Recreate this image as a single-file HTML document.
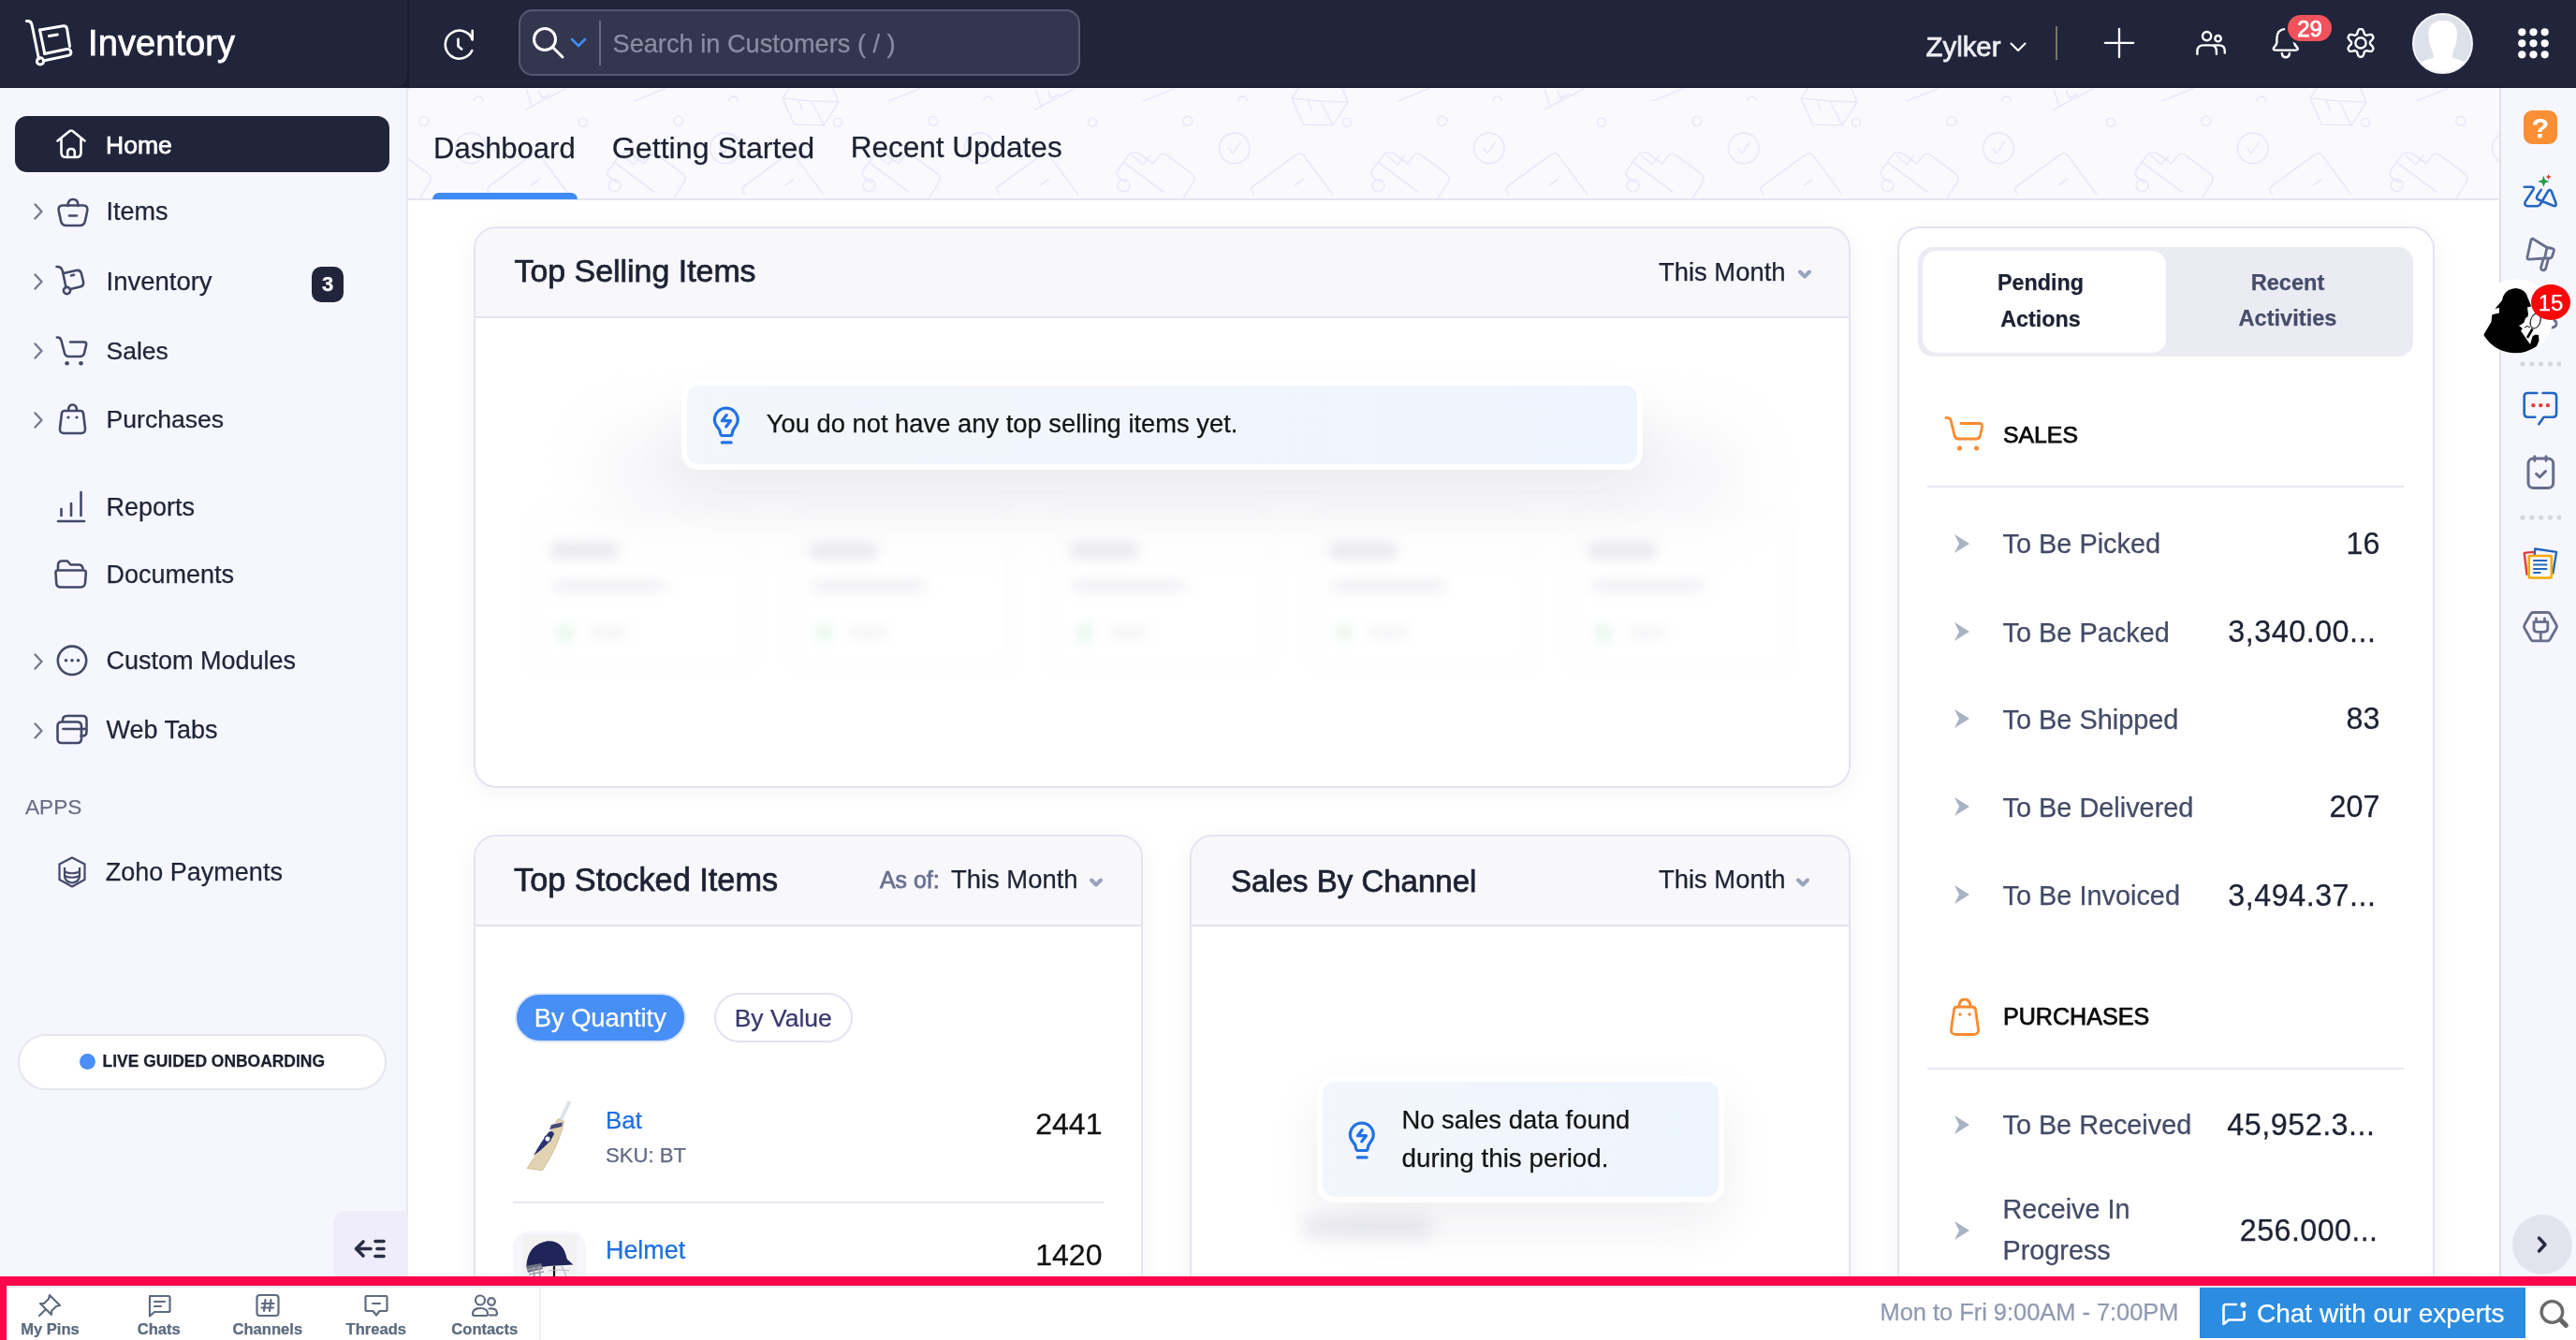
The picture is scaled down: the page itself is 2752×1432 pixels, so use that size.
<!DOCTYPE html><html><head><meta charset="utf-8"><style>
html,body{margin:0;padding:0;width:2752px;height:1432px;overflow:hidden;background:#fff;}
body{position:relative;font-family:"Liberation Sans",sans-serif;}
.t{position:absolute;line-height:1;white-space:nowrap;-webkit-text-stroke:0.25px currentColor;}
.b{position:absolute;box-sizing:border-box;}
.t.med{-webkit-text-stroke:0.75px currentColor;}
</style></head><body><div style="position:absolute;left:0;top:0;width:2752px;height:1432px;overflow:hidden;will-change:transform;">
<div class="b" style="left:0.00px;top:0.00px;width:2752.00px;height:94.00px;background:#21253b;"></div>
<div class="b" style="left:420.00px;top:76.00px;width:17.00px;height:18.00px;background:#191b2d;"></div>
<div class="b" style="left:0.00px;top:0.00px;width:435.00px;height:94.00px;background:#21253b;border-radius:0 0 14px 0;"></div>
<div class="b" style="left:435.00px;top:0.00px;width:1.50px;height:94.00px;background:#1b1d30;"></div>
<div class="b" style="left:0.00px;top:92.80px;width:2752.00px;height:1.20px;background:#181a2c;"></div>
<svg class="b" style="left:20.00px;top:10.00px;" width="60" height="64" viewBox="0 0 60 64" fill="none"><g stroke="#fff" stroke-width="3" stroke-linecap="round" stroke-linejoin="round">
<path d="M8.4 12.5 C11 12.2 13.5 13.5 14.1 16.7 L21.5 53"/>
<path d="M22.5 22 L47.5 17.8 Q51 17.4 51.6 20.8 L54.5 39.5"/>
<path d="M22.5 22 L27.7 47"/>
<path d="M27.5 47.5 L51 42.5 Q55.5 41.8 55.8 45.5 Q56.3 48.6 52.8 49.4 L28.5 54.5"/>
<path d="M32.4 28.5 L41.3 26.9"/>
<circle cx="23" cy="55.4" r="3.6"/></g></svg>
<div class="t med" style="top:26.83px;font-size:38px;color:#ffffff;left:94.00px;letter-spacing:0.1px;">Inventory</div>
<svg class="b" style="left:470.00px;top:26.00px;" width="42" height="42" viewBox="0 0 42 42" fill="none"><g stroke="#fff" stroke-width="2.6" stroke-linecap="round" stroke-linejoin="round" fill="none">
<path d="M34.7 16.2 A15 15 0 1 0 34.3 28"/>
<path d="M34.7 6.7 L34.7 16.2"/>
<path d="M19.5 15.7 L19.5 23.5 L23.2 26.4"/></g></svg>
<div class="b" style="left:554.00px;top:10.00px;width:600.00px;height:71.00px;background:#33364f;border:2px solid #55586f;border-radius:15px;"></div>
<svg class="b" style="left:566.00px;top:27.00px;" width="40" height="38" viewBox="0 0 40 38" fill="none"><g stroke="#fff" stroke-width="3" stroke-linecap="round" fill="none"><circle cx="16" cy="15" r="11.5"/><path d="M24.5 23.5 L35 34"/></g></svg>
<svg class="b" style="left:608.00px;top:38.00px;" width="20" height="16" viewBox="0 0 20 16" fill="none"><path d="M3 4 L10 11 L17 4" stroke="#3b8ff6" stroke-width="2.6" stroke-linecap="round" stroke-linejoin="round" fill="none"/></svg>
<div class="b" style="left:640.00px;top:22.00px;width:2.00px;height:48.00px;background:#686b80;"></div>
<div class="t " style="top:32.98px;font-size:27.2px;color:#8c8da2;left:654.50px;">Search in Customers ( / )</div>
<div class="t med" style="top:35.11px;font-size:29.4px;color:#ececf2;left:2057.50px;">Zylker</div>
<svg class="b" style="left:2144.00px;top:40.00px;" width="24" height="20" viewBox="0 0 24 20" fill="none"><path d="M4.5 6.5 L12 14 L19.5 6.5" stroke="#fff" stroke-width="2.1" stroke-linecap="round" stroke-linejoin="round" fill="none"/></svg>
<div class="b" style="left:2196.00px;top:28.00px;width:2.00px;height:36.00px;background:#77766f;"></div>
<svg class="b" style="left:2244.00px;top:26.00px;" width="40" height="40" viewBox="0 0 40 40" fill="none"><g stroke="#fff" stroke-width="2.3" stroke-linecap="round"><path d="M20 4.8 L20 35"/><path d="M4.8 19.8 L35.2 19.8"/></g></svg>
<svg class="b" style="left:2342.00px;top:30.00px;" width="40" height="32" viewBox="0 0 40 32" fill="none"><g stroke="#fff" stroke-width="2.4" stroke-linecap="round" fill="none">
<circle cx="15.6" cy="8.6" r="4.6"/><circle cx="27.6" cy="11.2" r="3.2"/>
<path d="M5.4 27.8 L5.4 25 Q5.4 18.4 12 18.4 L19.5 18.4 Q25.9 18.4 25.9 25 L25.9 27.8"/><path d="M22.5 18.4 L28.5 18.4 Q34.8 18.4 34.8 24.5 L34.8 26.5"/></g></svg>
<svg class="b" style="left:2422.00px;top:26.00px;" width="40" height="40" viewBox="0 0 40 40" fill="none"><g stroke="#fff" stroke-width="2.4" stroke-linecap="round" stroke-linejoin="round" fill="none">
<path d="M19.7 4.9 Q10.4 5.5 10.4 15 L10.4 19.5 Q10 22 7.5 24.5 Q5.3 27.6 9 27.6 L30.5 27.6 Q34.2 27.6 32 24.5 Q29.3 22 29 19.5 L29 15 Q29 5.5 19.7 4.9 Z"/>
<path d="M15.8 31 Q16.3 35.2 19.9 35.2 Q23.5 35.2 24 31"/></g></svg>
<div class="b" style="left:2444.00px;top:15.50px;width:47.00px;height:28.50px;background:#f1525b;border-radius:15px;box-shadow:0 0 0 3px #21253b;"></div>
<div class="t med" style="top:18.68px;font-size:24px;color:#ffffff;left:2444.00px;width:47px;text-align:center;">29</div>
<svg class="b" style="left:2501.00px;top:25.00px;" width="42" height="42" viewBox="0 0 42 42" fill="none"><g stroke="#fff" stroke-width="2.4" stroke-linejoin="round" fill="none"><path d="M31.00 20.90 L30.99 21.34 L30.96 21.77 L31.19 22.24 L31.73 22.79 L32.35 23.42 L32.98 24.11 L33.57 24.86 L34.06 25.65 L34.42 26.46 L34.41 27.15 L34.13 27.73 L33.82 28.30 L33.48 28.85 L33.12 29.39 L32.52 29.74 L31.65 29.83 L30.71 29.80 L29.77 29.67 L28.85 29.47 L28.01 29.25 L27.26 29.05 L26.74 29.09 L26.37 29.33 L26.00 29.56 L25.62 29.77 L25.23 29.96 L24.93 30.40 L24.73 31.14 L24.50 31.99 L24.21 32.88 L23.85 33.76 L23.41 34.59 L22.90 35.30 L22.29 35.64 L21.65 35.69 L21.00 35.70 L20.35 35.69 L19.71 35.64 L19.10 35.30 L18.59 34.59 L18.15 33.76 L17.79 32.88 L17.50 31.99 L17.27 31.14 L17.07 30.40 L16.77 29.96 L16.38 29.77 L16.00 29.56 L15.63 29.33 L15.26 29.09 L14.74 29.05 L13.99 29.25 L13.15 29.47 L12.23 29.67 L11.29 29.80 L10.35 29.83 L9.48 29.74 L8.88 29.39 L8.52 28.85 L8.18 28.30 L7.87 27.73 L7.59 27.15 L7.58 26.46 L7.94 25.65 L8.43 24.86 L9.02 24.11 L9.65 23.42 L10.27 22.79 L10.81 22.24 L11.04 21.77 L11.01 21.34 L11.00 20.90 L11.01 20.46 L11.04 20.03 L10.81 19.56 L10.27 19.01 L9.65 18.38 L9.02 17.69 L8.43 16.94 L7.94 16.15 L7.58 15.34 L7.59 14.65 L7.87 14.07 L8.18 13.50 L8.52 12.95 L8.88 12.41 L9.48 12.06 L10.35 11.97 L11.29 12.00 L12.23 12.13 L13.15 12.33 L13.99 12.55 L14.74 12.75 L15.26 12.71 L15.63 12.47 L16.00 12.24 L16.38 12.03 L16.77 11.84 L17.07 11.40 L17.27 10.66 L17.50 9.81 L17.79 8.92 L18.15 8.04 L18.59 7.21 L19.10 6.50 L19.71 6.16 L20.35 6.11 L21.00 6.10 L21.65 6.11 L22.29 6.16 L22.90 6.50 L23.41 7.21 L23.85 8.04 L24.21 8.92 L24.50 9.81 L24.73 10.66 L24.93 11.40 L25.23 11.84 L25.62 12.03 L26.00 12.24 L26.37 12.47 L26.74 12.71 L27.26 12.75 L28.01 12.55 L28.85 12.33 L29.77 12.13 L30.71 12.00 L31.65 11.97 L32.52 12.06 L33.12 12.41 L33.48 12.95 L33.82 13.50 L34.13 14.07 L34.41 14.65 L34.42 15.34 L34.06 16.15 L33.57 16.94 L32.98 17.69 L32.35 18.38 L31.73 19.01 L31.19 19.56 L30.96 20.03 L30.99 20.46 L31.00 20.90 Z"/><circle cx="21" cy="20.9" r="5.6"/></g></svg>
<div class="b" style="left:2577px;top:14px;width:65px;height:65px;border-radius:50%;background:#dde1ea;border:2px solid #f4f4f6;overflow:hidden;">
<svg width="65" height="65" viewBox="0 0 65 65" style="position:absolute;left:-2px;top:-2px"><g fill="#ffffff">
<path d="M17.5 23 Q17 8 32.8 8 Q48.5 8 48 24 Q47.5 34 44 40 L42.5 47.5 Q51 50 59 53.5 L66 66 L-1 66 L6 53.5 Q14 50 23 47.5 L21.5 40 Q18 34 17.5 23 Z"/></g></svg></div>
<svg class="b" style="left:2690.00px;top:30.00px;" width="34" height="34" viewBox="0 0 34 34" fill="none"><circle cx="4.3" cy="4.3" r="4.1" fill="#fff"/><circle cx="4.3" cy="16.3" r="4.1" fill="#fff"/><circle cx="4.3" cy="28.3" r="4.1" fill="#fff"/><circle cx="16.5" cy="4.3" r="4.1" fill="#fff"/><circle cx="16.5" cy="16.3" r="4.1" fill="#fff"/><circle cx="16.5" cy="28.3" r="4.1" fill="#fff"/><circle cx="28.7" cy="4.3" r="4.1" fill="#fff"/><circle cx="28.7" cy="16.3" r="4.1" fill="#fff"/><circle cx="28.7" cy="28.3" r="4.1" fill="#fff"/></svg>
<div class="b" style="left:0.00px;top:94.00px;width:435.00px;height:1270.00px;background:#f6f6fe;"></div>
<div class="b" style="left:434.00px;top:94.00px;width:2.00px;height:1270.00px;background:#e8e8f4;"></div>
<div class="b" style="left:16.00px;top:124.00px;width:400.00px;height:60.00px;background:#21253b;border-radius:13px;"></div>
<svg class="b" style="left:56.00px;top:136.00px;" width="40" height="36" viewBox="0 0 40 36" fill="none"><g stroke="#fff" stroke-width="2.6" stroke-linecap="round" stroke-linejoin="round" fill="none">
<path d="M5.5 14.5 L18.5 4 Q20 3 21.5 4 L34.5 14.5"/>
<path d="M9.5 12 L9.5 27 Q9.5 32 14.5 32 L25.5 32 Q30.5 32 30.5 27 L30.5 12"/>
<path d="M16.2 31.5 L16.2 26.5 Q16.2 23 20 23 Q23.8 23 23.8 26.5 L23.8 31.5"/></g></svg>
<div class="t med" style="top:142.07px;font-size:26.5px;color:#ffffff;left:113.00px;">Home</div>
<svg class="b" style="left:33.00px;top:216.00px;" width="16" height="20" viewBox="0 0 16 20" fill="none"><path d="M4.5 2.5 L11.5 10 L4.5 17.5" stroke="#777a8f" stroke-width="2.4" stroke-linecap="round" stroke-linejoin="round" fill="none"/></svg>
<div class="t " style="top:212.64px;font-size:27.0px;color:#1f2438;left:113.50px;">Items</div>
<svg class="b" style="left:33.00px;top:290.50px;" width="16" height="20" viewBox="0 0 16 20" fill="none"><path d="M4.5 2.5 L11.5 10 L4.5 17.5" stroke="#777a8f" stroke-width="2.4" stroke-linecap="round" stroke-linejoin="round" fill="none"/></svg>
<div class="t " style="top:286.72px;font-size:27.5px;color:#1f2438;left:113.50px;">Inventory</div>
<svg class="b" style="left:33.00px;top:364.50px;" width="16" height="20" viewBox="0 0 16 20" fill="none"><path d="M4.5 2.5 L11.5 10 L4.5 17.5" stroke="#777a8f" stroke-width="2.4" stroke-linecap="round" stroke-linejoin="round" fill="none"/></svg>
<div class="t " style="top:361.57px;font-size:26.5px;color:#1f2438;left:113.50px;">Sales</div>
<svg class="b" style="left:33.00px;top:438.50px;" width="16" height="20" viewBox="0 0 16 20" fill="none"><path d="M4.5 2.5 L11.5 10 L4.5 17.5" stroke="#777a8f" stroke-width="2.4" stroke-linecap="round" stroke-linejoin="round" fill="none"/></svg>
<div class="t " style="top:435.48px;font-size:26.6px;color:#1f2438;left:113.50px;">Purchases</div>
<div class="t " style="top:528.64px;font-size:27.0px;color:#1f2438;left:113.50px;">Reports</div>
<div class="t " style="top:601.14px;font-size:27.0px;color:#1f2438;left:113.50px;">Documents</div>
<svg class="b" style="left:33.00px;top:696.50px;" width="16" height="20" viewBox="0 0 16 20" fill="none"><path d="M4.5 2.5 L11.5 10 L4.5 17.5" stroke="#777a8f" stroke-width="2.4" stroke-linecap="round" stroke-linejoin="round" fill="none"/></svg>
<div class="t " style="top:693.14px;font-size:27.0px;color:#1f2438;left:113.50px;">Custom Modules</div>
<svg class="b" style="left:33.00px;top:770.50px;" width="16" height="20" viewBox="0 0 16 20" fill="none"><path d="M4.5 2.5 L11.5 10 L4.5 17.5" stroke="#777a8f" stroke-width="2.4" stroke-linecap="round" stroke-linejoin="round" fill="none"/></svg>
<div class="t " style="top:767.14px;font-size:27.0px;color:#1f2438;left:113.50px;">Web Tabs</div>
<div class="b" style="left:333.00px;top:285.00px;width:34.00px;height:37.50px;background:#21253b;border-radius:10px;"></div>
<div class="t " style="top:293.38px;font-size:22px;color:#ffffff;font-weight:700;left:333.00px;width:34px;text-align:center;">3</div>
<svg class="b" style="left:58.00px;top:208.00px;" width="38" height="36" viewBox="0 0 38 36" fill="none"><g stroke="#434a69" stroke-width="2.6" stroke-linecap="round" stroke-linejoin="round" fill="none"><path d="M14.5 12 Q14.5 5 20 5 Q25.5 5 25.5 12"/><path d="M9 11.5 L31 11.5 Q36 11.5 35.3 17 L33 28 Q32 33 27 33 L13 33 Q8 33 7 28 L4.7 17 Q4 11.5 9 11.5 Z"/><path d="M16 22.5 L24 22.5"/></g></svg>
<svg class="b" style="left:58.00px;top:280.00px;" width="38" height="38" viewBox="0 0 38 38" fill="none"><g stroke="#434a69" stroke-width="2.6" stroke-linecap="round" stroke-linejoin="round" fill="none"><path d="M2.5 5 Q7.5 4.8 8.8 9.5 L12.5 27"/><path d="M10 12 L23.5 9 Q28 8 29 12.5 L31 21 Q32 25.5 27.5 26.5 L17 29"/><path d="M18 14.5 L21 13.8"/><circle cx="13.5" cy="30.5" r="3.6"/></g></svg>
<svg class="b" style="left:58.00px;top:356.00px;" width="38" height="36" viewBox="0 0 38 36" fill="none"><g stroke="#434a69" stroke-width="2.6" stroke-linecap="round" stroke-linejoin="round" fill="none"><path d="M2.8 4.5 Q6.5 4.2 7.5 8 L11 21.5 Q12 25 15.5 25 L27.5 25 Q31 25 32 21.5 L34 13 Q35 9.5 31.5 9.5 L17 9.5"/></g><circle cx="13.6" cy="32.2" r="2.3" fill="#434a69"/><circle cx="28.5" cy="32.2" r="2.3" fill="#434a69"/></svg>
<svg class="b" style="left:58.00px;top:428.00px;" width="38" height="38" viewBox="0 0 38 38" fill="none"><g stroke="#434a69" stroke-width="2.6" stroke-linecap="round" stroke-linejoin="round" fill="none"><path d="M15 11 Q15 4.5 19.5 4.5 Q24 4.5 24 11"/><path d="M11 11 L28 11 Q30.5 11 31 13.5 L33 30 Q33.5 35 28.5 35 L10.5 35 Q5.5 35 6 30 L8 13.5 Q8.5 11 11 11 Z"/></g><circle cx="15" cy="18" r="1.6" fill="#434a69"/><circle cx="24" cy="18" r="1.6" fill="#434a69"/></svg>
<svg class="b" style="left:58.00px;top:522.00px;" width="38" height="38" viewBox="0 0 38 38" fill="none"><g stroke="#434a69" stroke-width="2.6" stroke-linecap="round" stroke-linejoin="round" fill="none"><path d="M4 35 L32 35"/><path d="M7.5 29 L7.5 22"/><path d="M18 29 L18 16"/><path d="M28.5 29 L28.5 4"/></g></svg>
<svg class="b" style="left:56.00px;top:594.00px;" width="40" height="38" viewBox="0 0 40 38" fill="none"><g stroke="#434a69" stroke-width="2.6" stroke-linecap="round" stroke-linejoin="round" fill="none"><path d="M6 14.5 L6 10 Q6 5.5 10.5 5.5 L16 5.5 L19.5 9.5 L28 9.5 Q32 9.5 32.5 13.5"/><path d="M5.5 15.5 L33.5 15.5 Q36 15.5 35.8 18 L35 29 Q34.6 33.5 30 33.5 L9 33.5 Q4.4 33.5 4.2 29 L3.5 18 Q3.3 15.5 5.5 15.5 Z"/></g></svg>
<svg class="b" style="left:57.00px;top:686.00px;" width="40" height="40" viewBox="0 0 40 40" fill="none"><g stroke="#434a69" stroke-width="2.6" stroke-linecap="round" stroke-linejoin="round" fill="none"><circle cx="20" cy="19.8" r="15.2"/></g><circle cx="13.5" cy="19.8" r="1.8" fill="#434a69"/><circle cx="20" cy="19.8" r="1.8" fill="#434a69"/><circle cx="26.5" cy="19.8" r="1.8" fill="#434a69"/></svg>
<svg class="b" style="left:57.00px;top:760.00px;" width="40" height="40" viewBox="0 0 40 40" fill="none"><g stroke="#434a69" stroke-width="2.6" stroke-linecap="round" stroke-linejoin="round" fill="none"><path d="M10 11 L10 9.5 Q10 5 14.5 5 L31 5 Q35.5 5 35.5 9.5 L35.5 22 Q35.5 26.5 31 26.5 L29.5 26.5"/><path d="M4.5 16 Q4.5 11.5 9 11.5 L25.5 11.5 Q30 11.5 30 16 L30 29.5 Q30 34 25.5 34 L9 34 Q4.5 34 4.5 29.5 Z"/><path d="M10.5 19 L35 19"/></g></svg>
<div class="t " style="top:851.87px;font-size:22.6px;color:#6b7086;left:27.00px;">APPS</div>
<svg class="b" style="left:57.00px;top:912.00px;" width="40" height="40" viewBox="0 0 40 40" fill="none"><g stroke="#434a69" stroke-width="2.2" stroke-linejoin="round" fill="none"><path d="M20 4.5 L33.5 11.5 L33.5 28 L20 35.5 L6.5 28 L6.5 11.5 Z"/><path d="M12 15 L12 24 Q12 30 20 31.5 Q28 30 28 24 L28 15"/><path d="M12 19.5 Q20 23 28 19.5"/><path d="M12 24 Q20 27.5 28 24"/></g></svg>
<div class="t " style="top:919.34px;font-size:27.0px;color:#1f2438;left:112.80px;">Zoho Payments</div>
<div class="b" style="left:19.00px;top:1105.00px;width:394.00px;height:60.00px;background:#fff;border:2px solid #e6e6ef;border-radius:30px;"></div>
<div class="b" style="left:84.60px;top:1126.30px;width:17.00px;height:17.00px;background:#4a8ef7;border-radius:50%;"></div>
<div class="t " style="top:1126.22px;font-size:17.46px;color:#1c1f2e;font-weight:700;left:109.60px;">LIVE GUIDED ONBOARDING</div>
<div class="b" style="left:356.00px;top:1294.00px;width:80.00px;height:70.00px;background:#eeedf9;border-radius:14px 0 0 0;"></div>
<svg class="b" style="left:376.00px;top:1320.00px;" width="40" height="30" viewBox="0 0 40 30" fill="none"><g stroke="#2a2e45" stroke-width="3.6" stroke-linecap="round" stroke-linejoin="round" fill="none"><path d="M12 7 L4.5 14.5 L12 22"/><path d="M5 14.5 L20 14.5"/><path d="M25 6.5 L34 6.5"/><path d="M27 14.5 L34 14.5"/><path d="M25 22.5 L34 22.5"/></g></svg>
<div class="b" style="left:436.00px;top:94.00px;width:2235.00px;height:119.00px;background:#fafafe;"></div>
<svg class="b" style="left:436.00px;top:94.00px;" width="2235" height="118" viewBox="0 0 2235 118" fill="none"><defs><pattern id="pt" x="1114.8" y="0" width="544" height="119" patternUnits="userSpaceOnUse">
<g stroke="#e9e7fb" stroke-width="1.6" fill="none" stroke-linecap="round" stroke-linejoin="round"><circle cx="40" cy="64.4" r="16.3"/><path d="M34.2 64.6 L38.2 69.9 L46.4 58.2"/>
<path d="M44.2 13.4 A4.5 4.5 0 0 1 53.2 13.4"/>
<circle cx="160.2" cy="36.7" r="4.5"/><circle cx="262" cy="35.3" r="5"/>
<path d="M60.8 114 Q56 108 60 105 L105 72 Q110 68 114 72 L145 114"/><path d="M104.5 104 L113.5 97.5"/>
<path d="M197 74.5 Q202 66 210 70 L224 80 M197 74.5 L188 87 Q184 92 189 96 L196 101 M193 79 L236 111 M203 72 L214 82 L222 72"/>
<circle cx="193.7" cy="104.2" r="6.5"/><path d="M225 81 L231 73 Q235 68 240 72 L267 92 Q271 96 268 101 L256 120"/>
<path d="M214.6 14 L248 0.6"/><path d="M99.5 2 L105.5 20 M99 23 L141 1 M113 3 L116 11 L125 6.5"/><g transform="translate(272 0)"><circle cx="40" cy="64.4" r="16.3"/><path d="M34.2 64.6 L38.2 69.9 L46.4 58.2"/>
<path d="M44.2 13.4 A4.5 4.5 0 0 1 53.2 13.4"/>
<circle cx="160.2" cy="36.7" r="4.5"/><circle cx="262" cy="35.3" r="5"/>
<path d="M60.8 114 Q56 108 60 105 L105 72 Q110 68 114 72 L145 114"/><path d="M104.5 104 L113.5 97.5"/>
<path d="M197 74.5 Q202 66 210 70 L224 80 M197 74.5 L188 87 Q184 92 189 96 L196 101 M193 79 L236 111 M203 72 L214 82 L222 72"/>
<circle cx="193.7" cy="104.2" r="6.5"/><path d="M225 81 L231 73 Q235 68 240 72 L267 92 Q271 96 268 101 L256 120"/>
<path d="M214.6 14 L248 0.6"/><path d="M101.2 11 L113.7 39 L145.2 40 L161.2 15 M101.2 11 L132.2 14 L145.2 40 M132.2 14 L161.2 15 M101.2 11 L110 -2 M161.2 15 L154 -2 M118.7 14 L122.2 24"/></g></g></pattern></defs><rect x="0" y="0" width="2235" height="119" fill="url(#pt)"/></svg>
<div class="b" style="left:436.00px;top:212.00px;width:2235.00px;height:2.00px;background:#e6e5f1;"></div>
<div class="t " style="top:142.76px;font-size:31.0px;color:#1d2133;left:463.00px;">Dashboard</div>
<div class="t " style="top:141.74px;font-size:32.2px;color:#1d2133;left:653.75px;">Getting Started</div>
<div class="t " style="top:142.34px;font-size:31.5px;color:#1d2133;left:908.75px;">Recent Updates</div>
<div class="b" style="left:462.00px;top:206.00px;width:155.00px;height:7.00px;background:#3f8bf5;border-radius:7px 7px 0 0;"></div>
<div class="b" style="left:506px;top:241.5px;width:1471px;height:600.5px;border:2px solid #e4e3f0;border-radius:24px;background:#fff;box-shadow:0 4px 24px rgba(40,40,90,0.05);overflow:hidden;"><div style="position:absolute;left:0;top:0;right:0;height:94.3px;background:#f7f7fc;border-bottom:2px solid #e4e3f0;"></div></div>
<div class="t med" style="top:273.30px;font-size:33.9px;color:#1d2133;left:549.50px;">Top Selling Items</div>
<div class="t " style="top:277.31px;font-size:27.4px;color:#1d2133;left:1772.00px;">This Month</div>
<svg class="b" style="left:1919.50px;top:287.00px;" width="16" height="14" viewBox="0 0 16 14" fill="none"><path d="M3 3.5 L8 8.5 L13 3.5" stroke="#9aa3bf" stroke-width="4" stroke-linecap="round" stroke-linejoin="round" fill="none"/></svg>
<div class="b" style="left:0;top:0;width:2752px;height:1432px;filter:blur(7px);pointer-events:none;"><div class="b" style="left:568px;top:545px;width:236px;height:170px;border:2px solid #f3f3f7;border-radius:14px;"></div><div class="b" style="left:588px;top:580px;width:72px;height:16px;background:#e6e6ec;border-radius:4px;"></div><div class="b" style="left:590px;top:622px;width:122px;height:9px;background:#ebebf2;border-radius:4px;"></div><div class="b" style="left:596px;top:668px;width:16px;height:16px;background:#dcf3e5;border-radius:50%;"></div><div class="b" style="left:630px;top:672px;width:40px;height:8px;background:#eeeef3;border-radius:4px;"></div><div class="b" style="left:845px;top:545px;width:236px;height:170px;border:2px solid #f3f3f7;border-radius:14px;"></div><div class="b" style="left:865px;top:580px;width:72px;height:16px;background:#e6e6ec;border-radius:4px;"></div><div class="b" style="left:867px;top:622px;width:122px;height:9px;background:#ebebf2;border-radius:4px;"></div><div class="b" style="left:873px;top:668px;width:16px;height:16px;background:#dcf3e5;border-radius:50%;"></div><div class="b" style="left:907px;top:672px;width:40px;height:8px;background:#eeeef3;border-radius:4px;"></div><div class="b" style="left:1123px;top:545px;width:236px;height:170px;border:2px solid #f3f3f7;border-radius:14px;"></div><div class="b" style="left:1143px;top:580px;width:72px;height:16px;background:#e6e6ec;border-radius:4px;"></div><div class="b" style="left:1145px;top:622px;width:122px;height:9px;background:#ebebf2;border-radius:4px;"></div><div class="b" style="left:1151px;top:668px;width:16px;height:16px;background:#dcf3e5;border-radius:50%;"></div><div class="b" style="left:1185px;top:672px;width:40px;height:8px;background:#eeeef3;border-radius:4px;"></div><div class="b" style="left:1400px;top:545px;width:236px;height:170px;border:2px solid #f3f3f7;border-radius:14px;"></div><div class="b" style="left:1420px;top:580px;width:72px;height:16px;background:#e6e6ec;border-radius:4px;"></div><div class="b" style="left:1422px;top:622px;width:122px;height:9px;background:#ebebf2;border-radius:4px;"></div><div class="b" style="left:1428px;top:668px;width:16px;height:16px;background:#dcf3e5;border-radius:50%;"></div><div class="b" style="left:1462px;top:672px;width:40px;height:8px;background:#eeeef3;border-radius:4px;"></div><div class="b" style="left:1677px;top:545px;width:236px;height:170px;border:2px solid #f3f3f7;border-radius:14px;"></div><div class="b" style="left:1697px;top:580px;width:72px;height:16px;background:#e6e6ec;border-radius:4px;"></div><div class="b" style="left:1699px;top:622px;width:122px;height:9px;background:#ebebf2;border-radius:4px;"></div><div class="b" style="left:1705px;top:668px;width:16px;height:16px;background:#dcf3e5;border-radius:50%;"></div><div class="b" style="left:1739px;top:672px;width:40px;height:8px;background:#eeeef3;border-radius:4px;"></div></div>
<div class="b" style="left:640px;top:455px;width:1220px;height:100px;background:#ededf3;border-radius:40px;filter:blur(30px);opacity:0.5;"></div>
<div class="b" style="left:728px;top:406px;width:1026.5px;height:96px;background:#fff;border-radius:18px;box-shadow:0 24px 60px rgba(30,30,70,0.05);"></div>
<div class="b" style="left:734.00px;top:412.00px;width:1015.00px;height:84.00px;background:linear-gradient(90deg,#f3f6fc,#eef5fe);border-radius:13px;"></div>
<svg class="b" style="left:761.00px;top:434.00px;" width="30" height="41" viewBox="0 0 30 41" fill="none"><g stroke="#2372e6" stroke-width="3.2" stroke-linecap="round" stroke-linejoin="round" fill="none">
<path d="M7.9 26 L3.9 20.2 A12.35 12.35 0 1 1 25.7 20.2 L21.9 26 L21.2 29.6 Q20.8 31.5 18.9 31.5 L11.1 31.5 Q9.2 31.5 8.7 29.6 Z"/>
<path d="M10.3 38.9 L20.1 38.9"/><path d="M15.2 9.6 L10.4 15.7 L19.5 15.7 L14.7 21.9"/></g></svg>
<div class="t " style="top:439.35px;font-size:27.35px;color:#141414;left:818.75px;">You do not have any top selling items yet.</div>
<div class="b" style="left:506px;top:891.5px;width:715px;height:508.5px;border:2px solid #e4e3f0;border-radius:24px;background:#fff;box-shadow:0 4px 24px rgba(40,40,90,0.05);overflow:hidden;"><div style="position:absolute;left:0;top:0;right:0;height:94.8px;background:#f7f7fc;border-bottom:2px solid #e4e3f0;"></div></div>
<div class="t med" style="top:922.97px;font-size:34.3px;color:#1d2133;left:549.00px;">Top Stocked Items</div>
<div class="t med" style="top:928.32px;font-size:24.9px;color:#6b7290;left:940.00px;">As of:</div>
<div class="t " style="top:926.21px;font-size:27.4px;color:#1d2133;left:1016.00px;">This Month</div>
<svg class="b" style="left:1162.50px;top:937.00px;" width="16" height="14" viewBox="0 0 16 14" fill="none"><path d="M3 3.5 L8 8.5 L13 3.5" stroke="#9aa3bf" stroke-width="4" stroke-linecap="round" stroke-linejoin="round" fill="none"/></svg>
<div class="b" style="left:549.50px;top:1061.00px;width:183.50px;height:53.00px;background:#478ff7;border:2px solid #dce6fb;border-radius:27px;"></div>
<div class="t " style="top:1074.39px;font-size:27.3px;color:#ffffff;left:549.25px;width:184px;text-align:center;">By Quantity</div>
<div class="b" style="left:762.50px;top:1061.00px;width:148.50px;height:53.00px;background:#fff;border:2px solid #e4e3f0;border-radius:27px;"></div>
<div class="t " style="top:1075.07px;font-size:26.5px;color:#3b3870;left:762.75px;width:148px;text-align:center;">By Value</div>
<svg class="b" style="left:548.00px;top:1172.00px;" width="72" height="84" viewBox="0 0 72 84" fill="none"><path d="M59.9 6.4 L51.5 24" stroke="#dfe3ea" stroke-width="4.2" stroke-linecap="round"/>
<path d="M48 23.6 L54.7 26.6 Q50 50 31.6 78.8 L15.1 76.6 Q32 52 48 23.6 Z" fill="#e2d3b2" stroke="#cdb98f" stroke-width="0.8"/>
<path d="M41 30 L53 27.5 L52 32 L39 35 Z" fill="#2a3170" opacity="0.85"/>
<path d="M38.5 37.5 Q43 35.5 44 40 Q40 50 22 63 Q30 48 38.5 37.5 Z" fill="#2a3170"/><circle cx="37" cy="45" r="3.2" fill="#fff" stroke="#2a3170" stroke-width="1.3"/></svg>
<div class="b" style="left:548.00px;top:1315.70px;width:78.00px;height:84.30px;background:#f6f6fb;border-radius:18px;"></div>
<div class="b" style="left:558.00px;top:1318.70px;width:58.00px;height:81.30px;background:#f2f2f3;"></div>
<svg class="b" style="left:556.00px;top:1320.00px;" width="62" height="50" viewBox="0 0 62 50" fill="none"><path d="M6.4 32 Q8 10 28.8 6.2 Q46 5 49.7 25.6 L56.4 31.6 L30 33 L8 36 Z" fill="#1f2558"/>
<path d="M6 33 L22 30 L24 36 L8 40 Z" fill="#6d7080"/><path d="M7 37 L23 34 M9 42 L25 39 M14 34 L15 46 M20 33 L21 46" stroke="#9a9ca8" stroke-width="1.5" fill="none"/>
<path d="M36 33 L36 46" stroke="#111" stroke-width="2.2"/><path d="M30 38 Q44 36 52 38 M44 33 L50 46" stroke="#b8bac4" stroke-width="1.2" fill="none"/></svg>
<div class="t " style="top:1183.99px;font-size:26.0px;color:#1f6fe0;left:647.00px;">Bat</div>
<div class="t " style="top:1224.04px;font-size:22.1px;color:#616985;left:647.00px;">SKU: BT</div>
<div class="t " style="top:1185.33px;font-size:32.1px;color:#111111;right:1574.50px;text-align:right;">2441</div>
<div class="b" style="left:548.00px;top:1283.50px;width:631.00px;height:2.00px;background:#e8e7f2;"></div>
<div class="t " style="top:1322.98px;font-size:26.9px;color:#1f6fe0;left:647.00px;">Helmet</div>
<div class="t " style="top:1324.83px;font-size:32.1px;color:#111111;right:1574.50px;text-align:right;">1420</div>
<div class="b" style="left:1271px;top:891.5px;width:706px;height:508.5px;border:2px solid #e4e3f0;border-radius:24px;background:#fff;box-shadow:0 4px 24px rgba(40,40,90,0.05);overflow:hidden;"><div style="position:absolute;left:0;top:0;right:0;height:94.8px;background:#f7f7fc;border-bottom:2px solid #e4e3f0;"></div></div>
<div class="t med" style="top:924.57px;font-size:33.0px;color:#1d2133;left:1315.00px;">Sales By Channel</div>
<div class="t " style="top:926.21px;font-size:27.4px;color:#1d2133;left:1772.00px;">This Month</div>
<svg class="b" style="left:1918.00px;top:937.00px;" width="16" height="14" viewBox="0 0 16 14" fill="none"><path d="M3 3.5 L8 8.5 L13 3.5" stroke="#9aa3bf" stroke-width="4" stroke-linecap="round" stroke-linejoin="round" fill="none"/></svg>
<div class="b" style="left:0;top:0;width:2752px;height:1432px;filter:blur(9px);pointer-events:none;"><div class="b" style="left:1390px;top:1300px;width:140px;height:22px;background:#ebebf1;border-radius:10px;"></div></div>
<div class="b" style="left:1407px;top:1150px;width:435px;height:134.5px;background:#fff;border-radius:18px;box-shadow:0 24px 60px rgba(30,30,70,0.07);"></div>
<div class="b" style="left:1413.00px;top:1156.00px;width:423.00px;height:123.00px;background:linear-gradient(90deg,#f3f6fc,#eef5fe);border-radius:13px;"></div>
<svg class="b" style="left:1440.00px;top:1197.50px;" width="30" height="41" viewBox="0 0 30 41" fill="none"><g stroke="#2372e6" stroke-width="3.2" stroke-linecap="round" stroke-linejoin="round" fill="none">
<path d="M7.9 26 L3.9 20.2 A12.35 12.35 0 1 1 25.7 20.2 L21.9 26 L21.2 29.6 Q20.8 31.5 18.9 31.5 L11.1 31.5 Q9.2 31.5 8.7 29.6 Z"/>
<path d="M10.3 38.9 L20.1 38.9"/><path d="M15.2 9.6 L10.4 15.7 L19.5 15.7 L14.7 21.9"/></g></svg>
<div class="t " style="top:1182.81px;font-size:27.4px;color:#141414;left:1497.50px;">No sales data found</div>
<div class="t " style="top:1224.47px;font-size:27.8px;color:#141414;left:1497.50px;">during this period.</div>
<div class="b" style="left:2026.6px;top:241.5px;width:574px;height:1160px;border:2px solid #e4e3f0;border-radius:24px;background:#fff;box-shadow:0 4px 24px rgba(40,40,90,0.05);"></div>
<div class="b" style="left:2049.00px;top:264.00px;width:529.00px;height:116.50px;background:#ebebf4;border-radius:16px;"></div>
<div class="b" style="left:2054.00px;top:268.00px;width:260.00px;height:109.00px;background:#fff;border-radius:15px;"></div>
<div class="t " style="top:291.03px;font-size:23.3px;color:#1d2133;font-weight:700;left:2060.00px;width:240px;text-align:center;">Pending</div>
<div class="t " style="top:329.53px;font-size:23.3px;color:#1d2133;font-weight:700;left:2060.00px;width:240px;text-align:center;">Actions</div>
<div class="t " style="top:290.77px;font-size:23.6px;color:#464d6a;font-weight:700;left:2324.00px;width:240px;text-align:center;">Recent</div>
<div class="t " style="top:329.27px;font-size:23.6px;color:#464d6a;font-weight:700;left:2324.00px;width:240px;text-align:center;">Activities</div>
<svg class="b" style="left:2075.00px;top:442.00px;" width="46" height="44" viewBox="0 0 46 44" fill="none"><g stroke="#f98a2f" stroke-width="2.8" stroke-linecap="round" stroke-linejoin="round" fill="none"><path d="M4 4.5 Q8.5 4 9.5 8.5 L13 23.5 Q14 27 17.5 27 L36 27 Q39.5 27 40.5 23.5 L42.5 14 Q43 10.5 39.5 10.5 L20 10.5"/></g><circle cx="18.5" cy="37" r="2.5" fill="#f98a2f"/><circle cx="36.5" cy="37" r="2.5" fill="#f98a2f"/></svg>
<div class="t med" style="top:452.76px;font-size:24.8px;color:#0a0a0a;left:2140.00px;">SALES</div>
<div class="b" style="left:2059.00px;top:519.00px;width:509.00px;height:2.00px;background:#e8e7f2;"></div>
<svg class="b" style="left:2087.00px;top:569.50px;" width="18" height="22" viewBox="0 0 18 22" fill="none"><path d="M1 1 L17 11 L1 21 L6 11 Z" fill="#a8b3c4"/></svg>
<div class="t " style="top:567.04px;font-size:28.9px;color:#434b67;left:2139.50px;">To Be Picked</div>
<div class="t " style="top:564.66px;font-size:32.3px;color:#1d2133;right:209.50px;text-align:right;">16</div>
<svg class="b" style="left:2087.00px;top:664.00px;" width="18" height="22" viewBox="0 0 18 22" fill="none"><path d="M1 1 L17 11 L1 21 L6 11 Z" fill="#a8b3c4"/></svg>
<div class="t " style="top:661.54px;font-size:28.9px;color:#434b67;left:2139.50px;">To Be Packed</div>
<div class="t " style="top:659.16px;font-size:32.3px;color:#1d2133;right:213.50px;text-align:right;letter-spacing:0.5px;">3,340.00...</div>
<svg class="b" style="left:2087.00px;top:757.00px;" width="18" height="22" viewBox="0 0 18 22" fill="none"><path d="M1 1 L17 11 L1 21 L6 11 Z" fill="#a8b3c4"/></svg>
<div class="t " style="top:754.54px;font-size:28.9px;color:#434b67;left:2139.50px;">To Be Shipped</div>
<div class="t " style="top:752.16px;font-size:32.3px;color:#1d2133;right:209.50px;text-align:right;">83</div>
<svg class="b" style="left:2087.00px;top:851.00px;" width="18" height="22" viewBox="0 0 18 22" fill="none"><path d="M1 1 L17 11 L1 21 L6 11 Z" fill="#a8b3c4"/></svg>
<div class="t " style="top:848.54px;font-size:28.9px;color:#434b67;left:2139.50px;">To Be Delivered</div>
<div class="t " style="top:846.16px;font-size:32.3px;color:#1d2133;right:209.50px;text-align:right;">207</div>
<svg class="b" style="left:2087.00px;top:945.40px;" width="18" height="22" viewBox="0 0 18 22" fill="none"><path d="M1 1 L17 11 L1 21 L6 11 Z" fill="#a8b3c4"/></svg>
<div class="t " style="top:942.94px;font-size:28.9px;color:#434b67;left:2139.50px;">To Be Invoiced</div>
<div class="t " style="top:940.56px;font-size:32.3px;color:#1d2133;right:213.50px;text-align:right;letter-spacing:0.5px;">3,494.37...</div>
<svg class="b" style="left:2078.00px;top:1062.00px;" width="42" height="48" viewBox="0 0 42 48" fill="none"><g stroke="#f98a2f" stroke-width="2.8" stroke-linecap="round" stroke-linejoin="round" fill="none"><path d="M15 14 Q15 6 21 6 Q27 6 27 14"/><path d="M13 14 L29 14 Q32 14 32.5 17 L35.5 38 Q36 43.5 30.5 43.5 L11.5 43.5 Q6 43.5 6.5 38 L9.5 17 Q10 14 13 14 Z"/></g><circle cx="16" cy="22" r="1.7" fill="#f98a2f"/><circle cx="26" cy="22" r="1.7" fill="#f98a2f"/></svg>
<div class="t med" style="top:1073.75px;font-size:25.1px;color:#0a0a0a;left:2140.00px;">PURCHASES</div>
<div class="b" style="left:2059.00px;top:1140.70px;width:509.00px;height:2.00px;background:#e8e7f2;"></div>
<svg class="b" style="left:2087.00px;top:1190.80px;" width="18" height="22" viewBox="0 0 18 22" fill="none"><path d="M1 1 L17 11 L1 21 L6 11 Z" fill="#a8b3c4"/></svg>
<div class="t " style="top:1188.42px;font-size:28.8px;color:#434b67;left:2139.50px;">To Be Received</div>
<div class="t " style="top:1185.96px;font-size:32.3px;color:#1d2133;right:214.50px;text-align:right;letter-spacing:0.5px;">45,952.3...</div>
<svg class="b" style="left:2087.00px;top:1304.00px;" width="18" height="22" viewBox="0 0 18 22" fill="none"><path d="M1 1 L17 11 L1 21 L6 11 Z" fill="#a8b3c4"/></svg>
<div class="t " style="top:1277.62px;font-size:28.8px;color:#434b67;left:2139.50px;">Receive In</div>
<div class="t " style="top:1322.12px;font-size:28.8px;color:#434b67;left:2139.50px;">Progress</div>
<div class="t " style="top:1298.66px;font-size:32.3px;color:#1d2133;right:211.50px;text-align:right;letter-spacing:0.4px;">256.000...</div>
<div class="b" style="left:2671.00px;top:94.00px;width:81.00px;height:1270.00px;background:#f6f6fe;"></div>
<div class="b" style="left:2669.50px;top:94.00px;width:2.00px;height:1270.00px;background:#e0e0ec;"></div>
<div class="b" style="left:2696.00px;top:118.00px;width:36.00px;height:36.00px;background:#fb8f34;border-radius:9px;"></div>
<div class="t " style="top:121.61px;font-size:30px;color:#ffffff;font-weight:700;left:2696.00px;width:36px;text-align:center;">?</div>
<svg class="b" style="left:2686.00px;top:176.00px;" width="56" height="120" viewBox="0 0 56 120" fill="none"><g stroke="#2366c2" stroke-width="2.6" stroke-linecap="round" stroke-linejoin="round" fill="none">
<path d="M10.75 23.7 L19 23.7 Q21.8 24 20.3 26.7 L11.8 39.6 Q10.2 43.8 14.5 44.3 L24.8 44.3 Q26.8 44.2 28 42.2 L29 40.5"/>
<path d="M28.7 26.9 L24.5 33.3 Q23 36 25.5 37.3 L41.5 43.8 Q45.5 45 44.6 41.2 L39.8 28.5 Q38.5 25.5 36.2 28.2 L29 40.5"/></g>
<path d="M31.4 11.8 L33 16.3 L37.5 17.9 L33 19.5 L31.4 24 L29.8 19.5 L25.3 17.9 L29.8 16.3 Z" fill="#1f9b4a"/><path d="M36.7 10 L37.6 12.1 L39.7 13 L37.6 13.9 L36.7 16 L35.8 13.9 L33.7 13 L35.8 12.1 Z" fill="#e53935"/>
<g stroke="#686e8c" stroke-width="2.8" stroke-linecap="round" stroke-linejoin="round" fill="none">
<path d="M20 79.2 L35 88.5 L32.5 100 L16 101.2 Q13.6 101.3 14 98.8 L17.8 81.3 Q18.3 78.8 20 79.2 Z"/>
<path d="M35 88.5 L40.5 89.5 Q42.8 90 42.3 92.3 L40.5 98 Q40 100 37.8 100 L32.5 100"/>
<path d="M31 101 L28.7 109.5 Q28 112.5 30.8 112.8 Q33 113 33.8 110.5 L36.3 101"/></g></svg>
<svg class="b" style="left:2692.00px;top:385.50px;" width="44" height="6" viewBox="0 0 44 6" fill="none"><circle cx="3.0" cy="3" r="2.6" fill="#d6d7df"/><circle cx="12.8" cy="3" r="2.6" fill="#d6d7df"/><circle cx="22.6" cy="3" r="2.6" fill="#d6d7df"/><circle cx="32.4" cy="3" r="2.6" fill="#d6d7df"/><circle cx="42.2" cy="3" r="2.6" fill="#d6d7df"/></svg>
<svg class="b" style="left:2686.00px;top:405.00px;" width="56" height="130" viewBox="0 0 56 130" fill="none"><g stroke="#2366c2" stroke-width="2.6" stroke-linecap="round" stroke-linejoin="round" fill="none">
<path d="M24.3 15 L14.5 15 Q10.7 15 10.7 18.8 L10.7 36.5 Q10.7 40.8 14.5 40.8 L22.3 40.8"/>
<path d="M30.6 15 L41.3 15 Q45.1 15 45.1 18.8 L45.1 36.5 Q45.1 40.8 41.3 40.8 L31.6 40.8 L26.3 48.3"/></g>
<circle cx="20.4" cy="28.2" r="2.1" fill="#e53935"/><circle cx="28.2" cy="28.2" r="2.1" fill="#e53935"/><circle cx="35.9" cy="28.2" r="2.1" fill="#e53935"/>
<g stroke="#686e8c" stroke-width="3" stroke-linecap="round" stroke-linejoin="round" fill="none">
<rect x="15" y="85" width="26.7" height="31.5" rx="5.5"/><path d="M21.8 82.8 L21.8 87.2 M34 82.8 L34 87.2"/><path d="M23.6 101.4 L27.3 104.8 L33.5 98.6"/></g></svg>
<svg class="b" style="left:2692.00px;top:550.00px;" width="44" height="6" viewBox="0 0 44 6" fill="none"><circle cx="3.0" cy="3" r="2.6" fill="#d6d7df"/><circle cx="12.8" cy="3" r="2.6" fill="#d6d7df"/><circle cx="22.6" cy="3" r="2.6" fill="#d6d7df"/><circle cx="32.4" cy="3" r="2.6" fill="#d6d7df"/><circle cx="42.2" cy="3" r="2.6" fill="#d6d7df"/></svg>
<svg class="b" style="left:2686.00px;top:570.00px;" width="56" height="130" viewBox="0 0 56 130" fill="none"><path d="M20.9 19.9 L10.7 20.9 L13.6 44.7" stroke="#e53935" stroke-width="2.4" fill="none" stroke-linejoin="round"/>
<path d="M21.8 23 L22.3 16.5 L45.1 19.9 L41.3 43.2" stroke="#2366c2" stroke-width="2.4" fill="none" stroke-linejoin="round"/>
<rect x="15.8" y="24" width="24" height="23.5" fill="#fff" stroke="#f5a800" stroke-width="2.6" rx="0.8"/>
<path d="M20.9 29.1 L34.5 29.1 M20.9 33.5 L34.5 33.5 M20.9 37.9 L34.5 37.9 M20.9 41.9 L27.7 41.9" stroke="#2366c2" stroke-width="2" stroke-linecap="round"/>
<g stroke="#686e8c" stroke-width="2.8" stroke-linecap="round" stroke-linejoin="round" fill="none">
<path d="M20.5 84.5 L35.5 84.5 Q37.5 84.5 38.5 86.2 L45 97.8 Q45.8 99.5 45 101.2 L38.5 112.8 Q37.5 114.8 35.5 114.8 L20.5 114.8 Q18.5 114.8 17.5 112.8 L11 101.2 Q10.2 99.5 11 97.8 L17.5 86.2 Q18.5 84.5 20.5 84.5 Z"/>
<path d="M21 94.7 L35.8 94.7 L35.8 101.5 Q35.8 105.3 32 105.3 L24.8 105.3 Q21 105.3 21 101.5 Z"/><path d="M23.5 90.8 L23.5 94.5 M32.5 90.8 L32.5 94.5 M28.3 105.5 L28.3 114.5"/></g></svg>
<svg class="b" style="left:2715.00px;top:335.00px;" width="24" height="26" viewBox="0 0 24 26" fill="none"><path d="M11 6.5 Q16.5 7 16 11.5 Q15.5 15 9.5 15" stroke="#686e8c" stroke-width="2.8" fill="none" stroke-linecap="round"/></svg>
<div class="b" style="left:2648px;top:298px;width:80px;height:80px;border-radius:50%;background:#fff;overflow:hidden;">
<svg width="80" height="80" viewBox="0 0 80 80"><path d="M4.7 60.7 L13.5 46 L14.4 38.3 L22 36.5 L21.9 30.8 L17.4 32.3 L25 23 Q27 11 39.8 9.9 Q50 11 52 19 L56.2 29.3 L52 30.5 L53 38 L52.4 40.5 L50 42 L48.5 46.5 L45.7 48.7 L43 50 L47 53 L45 55.5 L55 70 L57.5 61.5 L60.5 59.5 L64 60 L64.5 66 L62 71.9 Q50 80 36.8 79.3 Q15 77 4.7 60.7 Z" fill="#000"/>
<ellipse cx="60.7" cy="45" rx="5.2" ry="8.2" fill="none" stroke="#222" stroke-width="1.2" transform="rotate(18 60.7 45)"/><path d="M57.5 53.5 L52 63" stroke="#000" stroke-width="2.5"/><path d="M49 52 Q52 49 55 52" stroke="#000" stroke-width="1" fill="none"/></svg></div>
<div class="b" style="left:2704.00px;top:304.00px;width:42.00px;height:38.00px;background:#f70707;border-radius:50%;"></div>
<div class="t " style="top:311.68px;font-size:24px;color:#ffffff;left:2704.00px;width:42px;text-align:center;">15</div>
<div class="b" style="left:2684.00px;top:1298.00px;width:64.00px;height:64.00px;background:#e3e3ed;border-radius:50%;"></div>
<svg class="b" style="left:2704.00px;top:1318.00px;" width="24" height="24" viewBox="0 0 24 24" fill="none"><path d="M8.5 5 L15 12 L8.5 19" stroke="#272b40" stroke-width="3.4" stroke-linecap="round" stroke-linejoin="round" fill="none"/></svg>
<div class="b" style="left:0.00px;top:1364.00px;width:2752.00px;height:10.30px;background:#fe0449;"></div>
<div class="b" style="left:0.00px;top:1374.00px;width:2752.00px;height:58.00px;background:#fff;"></div>
<div class="b" style="left:0.00px;top:1374.00px;width:7.00px;height:58.00px;background:#fe0449;"></div>
<div class="b" style="left:576.00px;top:1374.00px;width:2.00px;height:58.00px;background:#ececf1;"></div>
<div class="b" style="left:7.00px;top:1374.30px;width:2745.00px;height:1.50px;background:#e6e6ec;"></div>
<div class="t " style="top:1413.45px;font-size:16.6px;color:#5b6b7e;font-weight:700;left:-1.50px;width:110px;text-align:center;">My Pins</div>
<div class="t " style="top:1413.45px;font-size:16.6px;color:#5b6b7e;font-weight:700;left:114.80px;width:110px;text-align:center;">Chats</div>
<div class="t " style="top:1413.45px;font-size:16.6px;color:#5b6b7e;font-weight:700;left:230.80px;width:110px;text-align:center;">Channels</div>
<div class="t " style="top:1413.45px;font-size:16.6px;color:#5b6b7e;font-weight:700;left:346.80px;width:110px;text-align:center;">Threads</div>
<div class="t " style="top:1413.45px;font-size:16.6px;color:#5b6b7e;font-weight:700;left:462.80px;width:110px;text-align:center;">Contacts</div>
<svg class="b" style="left:38.00px;top:1380.00px;" width="30" height="30" viewBox="0 0 30 30" fill="none"><g stroke="#5f6c80" stroke-width="2.2" stroke-linecap="round" stroke-linejoin="round" fill="none"><path d="M15 4 L26 15 L22 16 L17 21 L17 25 L5 13 L9 13 L14 8 Z"/><path d="M10.5 19.5 L4 26"/></g></svg>
<svg class="b" style="left:155.00px;top:1381.00px;" width="30" height="28" viewBox="0 0 30 28" fill="none"><g stroke="#5f6c80" stroke-width="2.2" stroke-linecap="round" stroke-linejoin="round" fill="none"><path d="M5 4 L25 4 Q26.5 4 26.5 5.5 L26.5 19.5 Q26.5 21 25 21 L10 21 L5 25.5 L5 5.5 Q5 4 5 4 Z"/><path d="M10 10 L21 10 M10 15 L17 15"/></g></svg>
<svg class="b" style="left:271.00px;top:1381.00px;" width="30" height="28" viewBox="0 0 30 28" fill="none"><g stroke="#5f6c80" stroke-width="2.2" stroke-linecap="round" stroke-linejoin="round" fill="none"><rect x="3.5" y="3" width="23" height="22" rx="3"/><path d="M12.5 8 L11 20 M18.5 8 L17 20 M9 12 L21.5 12 M8.5 16.5 L21 16.5"/></g></svg>
<svg class="b" style="left:387.00px;top:1381.00px;" width="30" height="28" viewBox="0 0 30 28" fill="none"><g stroke="#5f6c80" stroke-width="2.2" stroke-linecap="round" stroke-linejoin="round" fill="none"><path d="M4.5 4 L25.5 4 Q26.5 4 26.5 5 L26.5 19 Q26.5 20 25.5 20 L18.5 20 L15 24.5 L11.5 20 L4.5 20 Q3.5 20 3.5 19 L3.5 5 Q3.5 4 4.5 4 Z"/><path d="M11 12 L19 12"/></g></svg>
<svg class="b" style="left:502.00px;top:1381.00px;" width="32" height="28" viewBox="0 0 32 28" fill="none"><g stroke="#5f6c80" stroke-width="2.2" stroke-linecap="round" stroke-linejoin="round" fill="none"><circle cx="11" cy="8.5" r="5"/><circle cx="23" cy="10" r="3.8"/><path d="M3 23 Q3 17 11 17 Q19 17 19 23 Q19 25 17 25 L5 25 Q3 25 3 23 Z"/><path d="M20.5 17.5 Q29 16.5 29 22.5 Q29 24.5 27 24.5 L21 24.5"/></g></svg>
<div class="t " style="top:1389.80px;font-size:25.4px;color:#8f9ab2;left:2008.50px;">Mon to Fri 9:00AM - 7:00PM</div>
<div class="b" style="left:2350.00px;top:1376.00px;width:348.00px;height:54.00px;background:#2b8ce0;"></div>
<svg class="b" style="left:2372.00px;top:1389.00px;" width="30" height="30" viewBox="0 0 30 30" fill="none"><g stroke="#fff" stroke-width="2.6" stroke-linecap="round" stroke-linejoin="round" fill="none"><path d="M17 5 L6 5 Q3.5 5 3.5 7.5 L3.5 26 L9 21.5 L23 21.5 Q25.5 21.5 25.5 19 L25.5 13"/></g><circle cx="24.5" cy="5.5" r="3" fill="#fff"/></svg>
<div class="t " style="top:1390.30px;font-size:28.0px;color:#ffffff;left:2411.00px;">Chat with our experts</div>
<svg class="b" style="left:2709.00px;top:1386.00px;" width="43" height="40" viewBox="0 0 43 40" fill="none"><circle cx="17.4" cy="16" r="11.3" stroke="#6a6a6a" stroke-width="3.3" fill="none"/><path d="M27.2 25.2 L32.3 30.3" stroke="#666" stroke-width="5.2" stroke-linecap="round"/></svg>
</div></body></html>
